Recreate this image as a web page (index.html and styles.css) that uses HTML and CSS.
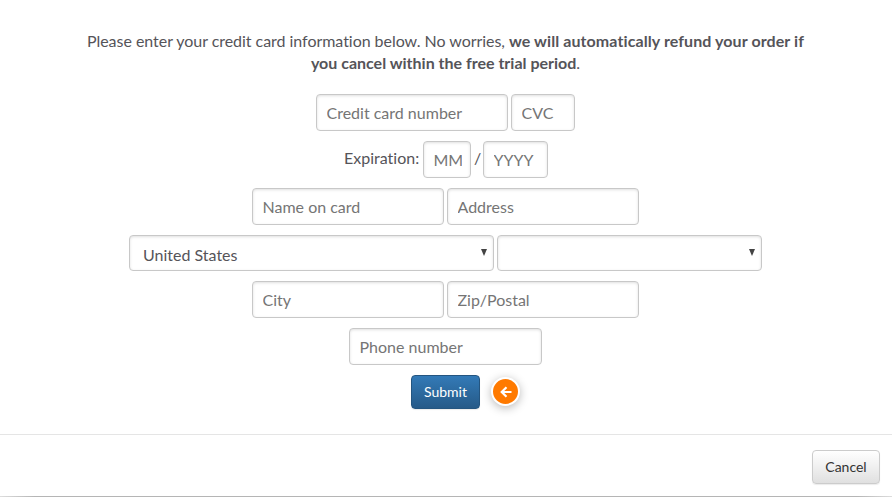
FILE: index.html
```html
<!DOCTYPE html>
<html lang="en">
<head>
  <meta charset="UTF-8">
  <meta name="viewport" content="width=device-width, initial-scale=1.0">
  <title>Credit card information</title>
  <link rel="stylesheet" href="styles.css">
</head>
<body>

<div class="modal">
  <form class="card-form" id="cardForm" novalidate>
    <div class="intro">
      <div class="lead">Please enter your credit card information below. No worries, <strong>we will automatically refund your order if</strong></div>
      <div><strong>you cancel within the free trial period</strong>.</div>
    </div>

    <div class="row">
      <input type="text" class="field" placeholder="Credit card number">
      <input type="text" class="field cvc" placeholder="CVC">
    </div>

    <div class="row expiration">
      <label for="month">Expiration:</label>
      <input type="text" class="field month" id="month" placeholder="MM">
      <span class="slash">/</span>
      <input type="text" class="field year" placeholder="YYYY">
    </div>

    <div class="row">
      <input type="text" class="field" placeholder="Name on card">
      <input type="text" class="field" placeholder="Address">
    </div>

    <div class="row">
      <div class="select-wrap country">
        <select class="field">
          <option>United States</option>
        </select>
        <svg class="caret" viewBox="0 0 6 7"><path d="M0 0h6L3 7z"/></svg>
      </div>
      <div class="select-wrap state">
        <select class="field">
          <option></option>
        </select>
        <svg class="caret" viewBox="0 0 6 7"><path d="M0 0h6L3 7z"/></svg>
      </div>
    </div>

    <div class="row">
      <input type="text" class="field" placeholder="City">
      <input type="text" class="field" placeholder="Zip/Postal">
    </div>

    <div class="row">
      <input type="text" class="field phone" placeholder="Phone number">
    </div>

    <div class="row submit-row">
      <button type="submit" class="btn btn-primary">Submit</button>
      <span class="hint">
        <svg viewBox="0 0 12 12"><path d="M11.5 6H2M6.5 1.2L1.7 6L6.5 10.8"/></svg>
      </span>
    </div>
  </form>

  <div class="footer">
    <button type="button" class="btn">Cancel</button>
  </div>
  <div class="bottom-edge"></div>
</div>

</body>
</html>
```

FILE: styles.css
```css
* { box-sizing: border-box; }

body {
  margin: 0;
  font-family: Lato, sans-serif;
  font-size: 16px;
  font-variant-ligatures: none;
  line-height: 22px;
  color: #555459;
  background: #fff;
}

.modal {
  display: flex;
  flex-direction: column;
  height: 497px;
  overflow: hidden;
}

.card-form {
  display: flex;
  flex-direction: column;
  gap: 10px;
  height: 434px;
  padding: 30px 81px 0 80px;
}

.intro {
  margin: 0 0 10px;
  text-align: center;
}

.lead { letter-spacing: -0.04px; }
.lead strong { letter-spacing: 0.09px; }

.row {
  display: flex;
  justify-content: center;
  gap: 3px;
}

.field {
  width: 192px;
  height: 37px;
  padding: 0 8px 0 9.5px;
  font-family: inherit;
  font-size: 16px;
  color: #555459;
  background: #fff;
  border: 1px solid #c8c8c8;
  border-radius: 4px;
  box-shadow: inset 0 1px 3px rgba(0,0,0,0.13);
  outline: none;
}

.field::placeholder {
  color: #757575;
  opacity: 1;
}

.cvc { width: 64px; }
.month { width: 48px; }
.year { width: 65px; }
.phone { width: 193px; }

.expiration label {
  width: 77px;
  padding: 6px 0 0 1px;
}

.slash {
  width: 6px;
  padding-top: 6px;
}

.select-wrap { position: relative; }
.country { width: 365px; }
.state { width: 265px; }

.select-wrap .field {
  display: block;
  width: 100%;
  height: 36px;
  padding: 2px 13px 0;
  appearance: none;
}

.caret {
  position: absolute;
  top: 14px;
  right: 7px;
  width: 6px;
  height: 7px;
  fill: #444;
}

.submit-row { position: relative; }

.btn {
  height: 34px;
  padding: 0 12px 2px;
  font-family: inherit;
  font-size: 14px;
  color: #333;
  background: linear-gradient(#fff, #e0e0e0);
  border: 1px solid #ccc;
  border-radius: 4px;
  box-shadow: 0 1px 1px rgba(0,0,0,0.08);
  cursor: pointer;
}

.btn-primary {
  width: 69px;
  color: #fff;
  background: linear-gradient(#337ab7, #265a88);
  border-color: #245580;
}

.hint {
  position: absolute;
  top: 2px;
  left: calc(50% + 45px);
  display: flex;
  align-items: center;
  justify-content: center;
  width: 29px;
  height: 29px;
  background: #ff7a00;
  border: 2px solid #fff;
  border-radius: 50%;
  box-shadow: 0 2px 10px rgba(0,0,0,0.28);
}

.hint svg {
  width: 12px;
  height: 12px;
  margin-left: 1px;
  fill: none;
  stroke: #fff;
  stroke-width: 2.2;
}

.footer {
  display: flex;
  flex: 1;
  justify-content: flex-end;
  padding: 15px 12px 0;
  border-top: 1px solid #e5e5e5;
}

.footer .btn { width: 68px; }

.bottom-edge {
  height: 1px;
  background: linear-gradient(90deg, #ddd, #b5b5b5 35px, #b5b5b5 calc(100% - 35px), #ddd);
}
```
